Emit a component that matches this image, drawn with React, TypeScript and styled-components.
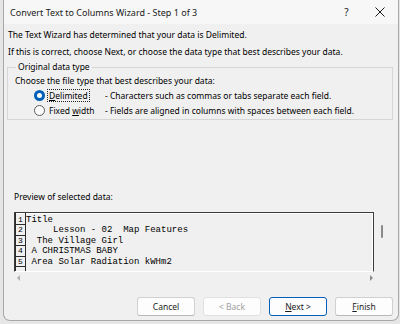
import styled, { createGlobalStyle } from 'styled-components'

const GlobalStyle = createGlobalStyle`
  html, body {
    margin: 0;
    padding: 0;
  }
  body {
    width: 400px;
    height: 324px;
    overflow: hidden;
    background: #e6e6e6;
    font-family: 'Noto Sans', 'Segoe UI', sans-serif;
    color: #000;
  }
`

const previewRows = [
  'Title',
  '     Lesson - 02  Map Features',
  '  The Village Girl',
  ' A CHRISTMAS BABY',
  ' Area Solar Radiation kWHm2'
]

const buttons = [
  { label: 'Cancel', key: '', disabled: false, primary: false },
  { label: '< Back', key: '', disabled: true, primary: false },
  { label: 'ext >', key: 'N', disabled: false, primary: true },
  { label: 'inish', key: 'F', disabled: false, primary: false }
]

function App() {
  return (
    <>
      <GlobalStyle />
      <Dialog>
        <TitleBar>
          <Title>Convert Text to Columns Wizard - Step 1 of 3</Title>
          <TitleButtons>
            <HelpButton>?</HelpButton>
            <CloseButton>
              <svg width="10" height="10" viewBox="0 0 10 10">
                <path d="M0.5 0.5 L9.5 9.5 M9.5 0.5 L0.5 9.5" stroke="#1a1a1a" strokeWidth="1" />
              </svg>
            </CloseButton>
          </TitleButtons>
        </TitleBar>

        <Body>
          <Line>The Text Wizard has determined that your data is Delimited.</Line>
          <Line>If this is correct, choose Next, or choose the data type that best describes your data.</Line>

          <GroupBox>
            <Legend>Original data type</Legend>
            <Prompt>Choose the file type that best describes your data:</Prompt>
            <OptionRow>
              <Radio $checked />
              <OptionLabel>
                <Focus>
                  <u>D</u>elimited
                </Focus>
              </OptionLabel>
              <Description>- Characters such as commas or tabs separate each field.</Description>
            </OptionRow>
            <OptionRow>
              <Radio />
              <OptionLabel>
                <Plain>
                  Fixed <u>w</u>idth
                </Plain>
              </OptionLabel>
              <Description>- Fields are aligned in columns with spaces between each field.</Description>
            </OptionRow>
          </GroupBox>

          <PreviewLabel>Preview of selected data:</PreviewLabel>
          <PreviewArea>
            <PreviewBox>
              <NumberCol>
                {previewRows.map((_, i) => (
                  <NumberCell key={i}>{i + 1}</NumberCell>
                ))}
              </NumberCol>
              <TextCol>
                {previewRows.map((row, i) => (
                  <TextRow key={i}>{row}</TextRow>
                ))}
              </TextCol>
            </PreviewBox>
            <VScroll>
              <Thumb />
            </VScroll>
          </PreviewArea>
          <HScroll>
            <Arrow $dir="left" />
            <Arrow $dir="right" />
          </HScroll>
        </Body>

        <ButtonRow>
          {buttons.map((b) => (
            <Button key={b.label} disabled={b.disabled} $primary={b.primary}>
              {b.key && <u>{b.key}</u>}
              {b.label}
            </Button>
          ))}
        </ButtonRow>
      </Dialog>
    </>
  )
}

const Dialog = styled.div`
  box-sizing: border-box;
  margin-left: 3px;
  width: 396px;
  height: 321px;
  background: #f0f0f0;
  border: 1px solid #a8a8a8;
  border-top: none;
  border-radius: 0 0 7px 7px;
  display: flex;
  flex-direction: column;
  overflow: hidden;
`

const TitleBar = styled.div`
  height: 24px;
  display: flex;
  align-items: center;
  justify-content: space-between;
  padding-left: 6px;
  background: #f7f7f7;
`

const Title = styled.div`
  font-size: 9px;
  color: #1a1a1a;
`

const TitleButtons = styled.div`
  display: flex;
  align-items: center;
  height: 100%;
`

const HelpButton = styled.div`
  width: 36px;
  padding-left: 5px;
  box-sizing: border-box;
  text-align: center;
  font-size: 10px;
  color: #1a1a1a;
`

const CloseButton = styled.div`
  width: 36px;
  height: 100%;
  display: flex;
  align-items: center;
  justify-content: center;
`

const Body = styled.div`
  padding: 2px 5px 0 4px;
  display: flex;
  flex-direction: column;
`

const Line = styled.div`
  font-size: 8.5px;
  line-height: 17px;
  white-space: nowrap;
`

const GroupBox = styled.fieldset`
  margin: 1px 0 0 -1px;
  padding: 0 0 1px 7px;
  border: 1px solid #d6d6d6;
  min-width: 0;
`

const Legend = styled.legend`
  font-size: 8.5px;
  line-height: 12px;
  padding: 0 2px;
  margin-left: 1px;
`

const Prompt = styled.div`
  font-size: 8.5px;
  line-height: 15px;
`

const OptionRow = styled.div`
  display: flex;
  align-items: center;
  height: 15px;
  padding-left: 19px;
  font-size: 8.5px;
  white-space: nowrap;
`

const Radio = styled.span<{ $checked?: boolean }>`
  box-sizing: border-box;
  width: 11px;
  height: 11px;
  border-radius: 50%;
  flex-shrink: 0;
  background: ${({ $checked }) => ($checked ? '#fff' : '#fbfbfb')};
  border: ${({ $checked }) => ($checked ? '3px solid #005fb8' : '1px solid #5a5a5a')};
`

const OptionLabel = styled.div`
  width: 58px;
  padding-left: 2px;
  flex-shrink: 0;
`

const Focus = styled.span`
  display: inline-block;
  border: 1px dotted #222;
  padding: 0 1px;
  line-height: 11px;
`

const Plain = styled.span`
  display: inline-block;
  border: 1px solid transparent;
  padding: 0 1px;
  line-height: 11px;
`

const Description = styled.div``

const PreviewLabel = styled.div`
  margin-top: 70px;
  padding-left: 6px;
  font-size: 8.5px;
  line-height: 14px;
`

const PreviewArea = styled.div`
  margin-top: 8px;
  padding-left: 6px;
  display: flex;
`

const PreviewBox = styled.div`
  box-sizing: border-box;
  width: 360px;
  height: 60px;
  display: flex;
  border-top: 1px solid #3c3c3c;
  border-left: 1px solid #3c3c3c;
  border-right: 1px solid #3c3c3c;
  border-bottom: 1px solid #ffffff;
  box-shadow: inset 0 1px 0 #fff, inset -1px 0 0 #fff;
  overflow: hidden;
`

const NumberCol = styled.div`
  box-sizing: border-box;
  width: 11px;
  height: 100%;
  padding-top: 2px;
  border-left: 1px solid #2a2a2a;
  border-right: 1px solid #2a2a2a;
  flex-shrink: 0;
`

const NumberCell = styled.div`
  box-sizing: border-box;
  height: 10.4px;
  border-bottom: 1px solid #2a2a2a;
  font-family: 'Liberation Mono', monospace;
  font-size: 8px;
  line-height: 10px;
  text-align: center;
`

const TextCol = styled.div`
  padding-top: 2px;
`

const TextRow = styled.div`
  height: 10.4px;
  font-family: 'Liberation Mono', 'Courier New', monospace;
  font-size: 9px;
  line-height: 10.4px;
  white-space: pre;
`

const VScroll = styled.div`
  width: 14px;
  position: relative;
`

const Thumb = styled.div`
  position: absolute;
  left: 7px;
  top: 13px;
  width: 2px;
  height: 13px;
  border-radius: 1px;
  background: #8a8a8a;
`

const HScroll = styled.div`
  height: 11px;
  margin-left: 9px;
  width: 356px;
  display: flex;
  align-items: center;
  justify-content: space-between;
`

const Arrow = styled.span<{ $dir: 'left' | 'right' }>`
  width: 0;
  height: 0;
  border-top: 3px solid transparent;
  border-bottom: 3px solid transparent;
  ${({ $dir }) => ($dir === 'left' ? 'border-right: 3px solid #b0b0b0;' : 'border-left: 3px solid #8a8a8a;')}
`

const ButtonRow = styled.div`
  margin-top: auto;
  padding: 0 5px 4px 0;
  display: flex;
  justify-content: flex-end;
  gap: 8px;
`

const Button = styled.button<{ $primary?: boolean }>`
  box-sizing: border-box;
  width: 58px;
  height: 19px;
  padding: 0;
  border-radius: 3px;
  background: #fdfdfd;
  font-family: 'Noto Sans', 'Segoe UI', sans-serif;
  font-size: 8.5px;
  color: #1a1a1a;
  border: 1px solid ${({ $primary }) => ($primary ? '#005fb8' : '#d0d0d0')};
  border-bottom-color: ${({ $primary }) => ($primary ? '#005fb8' : '#b8b8b8')};

  &:disabled {
    color: #a0a0a0;
    border-color: #e0e0e0;
  }
`

export default App
